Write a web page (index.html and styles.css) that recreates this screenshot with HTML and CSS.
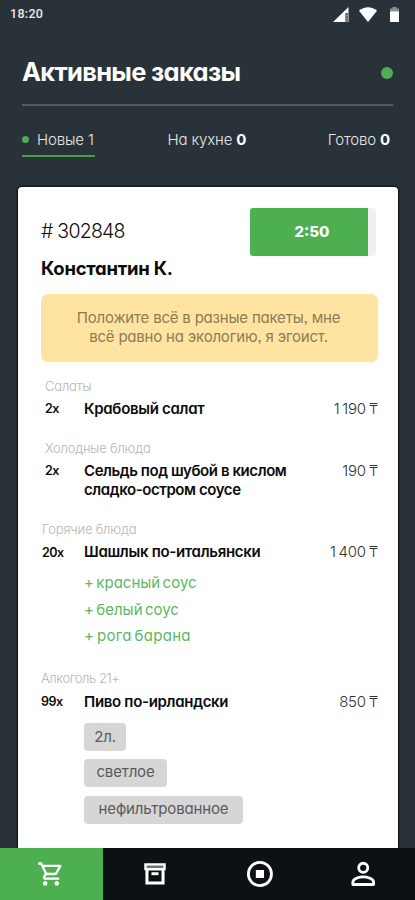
FILE: index.html
```html
<!DOCTYPE html>
<html lang="ru">
<head>
<meta charset="utf-8">
<meta name="viewport" content="width=device-width, initial-scale=1">
<title>Активные заказы</title>
<link rel="stylesheet" href="styles.css">
</head>
<body>
<div class="status">
  <span class="clock">18:20</span>
  <div class="status-icons">
    <svg class="signal" viewBox="0 0 16 15"><path d="M15.500 0V15H0z" fill="#fff"/><path d="M12 6h3.500v9H12z" fill="#8b9295"/><path d="M13 7h2M13 10h2M13 13h2" stroke="#38434a"/></svg>
    <svg class="wifi" viewBox="0 0 18 15"><path d="M9 15 0 3.800C5.200-.9 12.800-.9 18 3.800z" fill="#fff"/></svg>
    <svg class="battery" viewBox="0 0 9 15"><path d="M2.500 0h4v1.500H9V5H0V1.500h2.500z" fill="#8b9295"/><path d="M0 4.500h9V15H0z" fill="#fff"/></svg>
  </div>
</div>

<header class="header">
  <div class="title-row">
    <h1>Активные заказы</h1>
    <span class="online"></span>
  </div>
  <nav class="tabs">
    <a class="tab active"><i></i><span class="t-new">Новые 1</span></a>
    <a class="tab t-kitchen">На кухне <b>0</b></a>
    <a class="tab t-ready">Готово <b>0</b></a>
  </nav>
</header>

<main class="card">
  <div class="card-head">
    <div>
      <div class="number">#&nbsp;302848</div>
      <div class="customer">Константин К.</div>
    </div>
    <div class="timer"><span>2:50</span></div>
  </div>
  <div class="note"><span>Положите всё в разные пакеты, мне</span><span>всё равно на экологию, я эгоист.</span></div>

  <section>
    <div class="label">Салаты</div>
    <div class="item"><span class="qty">2x</span><span class="name">Крабовый салат</span><span class="price">1 190 ₸</span></div>
  </section>
  <section>
    <div class="label">Холодные блюда</div>
    <div class="item"><span class="qty">2x</span><span class="name tight">Сельдь под шубой в кислом<br>сладко-остром соусе</span><span class="price">190 ₸</span></div>
  </section>
  <section class="shift-hot">
    <div class="label">Горячие блюда</div>
    <div class="item"><span class="qty low">20x</span><span class="name">Шашлык по-итальянски</span><span class="price">1 400 ₸</span></div>
    <ul class="extras"><li>+ красный соус</li><li>+ белый соус</li><li class="wide">+ рога барана</li></ul>
  </section>
  <section class="shift-bar">
    <div class="label">Алкоголь 21+</div>
    <div class="item"><span class="qty">99x</span><span class="name">Пиво по-ирландски</span><span class="price">850 ₸</span></div>
    <div class="chips"><span class="chip c1">2л.</span><span class="chip c2">светлое</span><span class="chip c3">нефильтрованное</span></div>
  </section>
</main>

<nav class="bottom">
  <a class="current"><svg viewBox="0 0 24 24"><path d="M15.550 13c.75 0 1.410-.41 1.750-1.030l3.580-6.490A.996.996 0 0 0 20.010 4H5.210l-.94-2H1v2h2l3.600 7.590-1.350 2.440C4.520 15.370 5.480 17 7 17h12v-2H7l1.100-2h7.450zM6.160 6h12.150l-2.760 5H8.530L6.160 6zM7 18c-1.100 0-1.990.9-1.990 2S5.900 22 7 22s2-.9 2-2-.9-2-2-2zm10 0c-1.100 0-1.990.9-1.990 2s.89 2 1.990 2 2-.9 2-2-.9-2-2-2z"/></svg></a>
  <a><svg viewBox="0 0 24 24"><path fill-rule="evenodd" d="M2.800 2.800H21.200V8.800H20.200V21H3.800V8.800H2.800zM5 5V6.700H19V5zM6.400 9V18.500H17.600V9z"/><path d="M5 5h14v1.700H5z" fill="#777b7d"/><path d="M9 10.500h6v2.500H9z"/></svg></a>
  <a><svg viewBox="0 0 24 24"><circle cx="12.800" cy="12" r="9.900" fill="none" stroke="#fff" stroke-width="2.400"/><path d="M9.300 8.500h7v7h-7z"/></svg></a>
  <a><svg viewBox="0 0 24 24"><path fill="none" stroke="#fff" stroke-width="2.400" stroke-linejoin="round" d="M3.300 21v-2c0-3 5.400-4.600 8.900-4.600s8.900 1.600 8.900 4.600v2z"/><circle cx="12.200" cy="6.700" r="3.900" fill="none" stroke="#fff" stroke-width="2.400"/></svg></a>
</nav>
</body>
</html>
```
FILE: styles.css
```css
* { box-sizing: border-box; }
body {
  margin: 0;
  height: 900px;
  display: flex;
  flex-direction: column;
  overflow: hidden;
  background: #293238;
  color: #0b0b0b;
  font-family: Inter, "Noto Sans", sans-serif;
  font-feature-settings: "cv11", "ss03";
  font-size: 15px;
}
h1, ul { margin: 0; padding: 0; }

.status {
  height: 28px;
  display: flex;
  align-items: center;
  justify-content: space-between;
  padding: 0 16px 0 10px;
}
.clock { font: 500 12.500px/14px Roboto, sans-serif; letter-spacing: .3px; color: #e9ebec; }
.status-icons { display: flex; gap: 10px; }
.status-icons svg { height: 15px; }
.signal { width: 16px; }
.wifi { width: 18px; }
.battery { width: 9px; margin-left: 3px; }

.header { padding: 28px 22px 0; color: #fff; }
.title-row {
  display: flex;
  justify-content: space-between;
  align-items: center;
  height: 50px;
  padding-bottom: 16px;
  border-bottom: 2px solid #535b61;
}
h1 { font-size: 25.500px; line-height: 32px; font-weight: 700; letter-spacing: -.7px; }
.online { width: 12px; height: 12px; border-radius: 50%; background: #4caf50; margin-top: 1px; }
.tabs { display: flex; justify-content: space-between; padding-top: 24px; }
.tab { height: 27px; line-height: 19px; font-weight: 300; color: #e4e7e8; white-space: nowrap; letter-spacing: -.15px; }
.tab b { font-weight: 700; color: #fff; }
.active { display: flex; align-items: center; width: 73px; padding-bottom: 6px; border-bottom: 2px solid #43a04c; }
.active i { width: 7px; height: 7px; border-radius: 50%; background: #4caf50; margin-right: 8px; }
.t-kitchen { margin-right: 9px; }
.t-ready { margin-right: 3px; }

.card {
  flex: 1;
  margin: 30px 17px 0 18px;
  padding: 21px 20px 0 23px;
  background: #fff;
  border-radius: 4px 4px 0 0;
  box-shadow: 0 0 2px 1px #0c1013;
}
.card-head { display: flex; justify-content: space-between; height: 85.500px; }
.number { margin-top: 11px; font-size: 19.500px; line-height: 24px; font-weight: 300; letter-spacing: -.75px; }
.customer { margin-top: 13px; font-size: 18.500px; line-height: 24px; font-weight: 700; letter-spacing: -.25px; }
.timer {
  width: 126px;
  height: 48px;
  padding-right: 8px;
  margin-right: 2px;
  border-radius: 4px;
  background: #efefef;
}
.timer span {
  display: block;
  border-radius: 3px 0 0 3px;
  background: #4caf50;
  color: #fff;
  font-size: 15px;
  line-height: 48px;
  font-weight: 800;
  text-align: center;
  padding-left: 6px;
}
.note {
  height: 68px;
  margin-bottom: 16.500px;
  padding: 14px 2px 0 0;
  border-radius: 7px;
  background: #ffe4a1;
  color: #8d7b56;
  line-height: 19px;
  text-align: center;
  letter-spacing: -.2px;
}
.note span { display: block; }

section { margin-bottom: 22.500px; --left: 4px; }
.shift-hot { --left: 1px; margin-bottom: 20.500px; }
.shift-bar { --left: 0px; }
.label { padding-left: var(--left); font-size: 13px; line-height: 16px; font-weight: 300; letter-spacing: -.2px; color: #b5b5b5; }
.shift-bar .label { letter-spacing: -.4px; }
.item { display: flex; margin-top: 4.500px; line-height: 19px; white-space: nowrap; }
.shift-bar .item { margin-top: 5.500px; }
.qty { width: 43px; padding-left: var(--left); font-size: 12.500px; font-weight: 600; letter-spacing: -.5px; }
.low { padding-top: 1px; }
.name { flex: 1; font-weight: 600; letter-spacing: -.3px; }
.name.tight { letter-spacing: -.42px; }
.price { font-weight: 300; color: #333; word-spacing: -1px; letter-spacing: -.25px; }
.extras { list-style: none; margin: 8.500px 0 0 43px; line-height: 26.500px; color: #5cb860; word-spacing: -1.800px; }
.wide { letter-spacing: .3px; }
.chips { display: flex; flex-direction: column; align-items: flex-start; gap: 8.500px; margin: 12px 0 0 43px; }
.chip { height: 28px; border-radius: 4px; background: #d6d6d6; color: #5a5a5a; line-height: 27px; text-align: center; letter-spacing: -.15px; }
.c1 { width: 42px; }
.c2 { width: 83px; line-height: 26px; }
.c3 { width: 159px; line-height: 26px; }

.bottom { display: grid; grid-template-columns: 102.500px repeat(3, 1fr); height: 52px; background: #0c1113; z-index: 1; }
.bottom a { display: flex; align-items: center; justify-content: center; }
.bottom svg { width: 28px; height: 28px; fill: #fff; }
.bottom .current { background: #4caf50; }
```
